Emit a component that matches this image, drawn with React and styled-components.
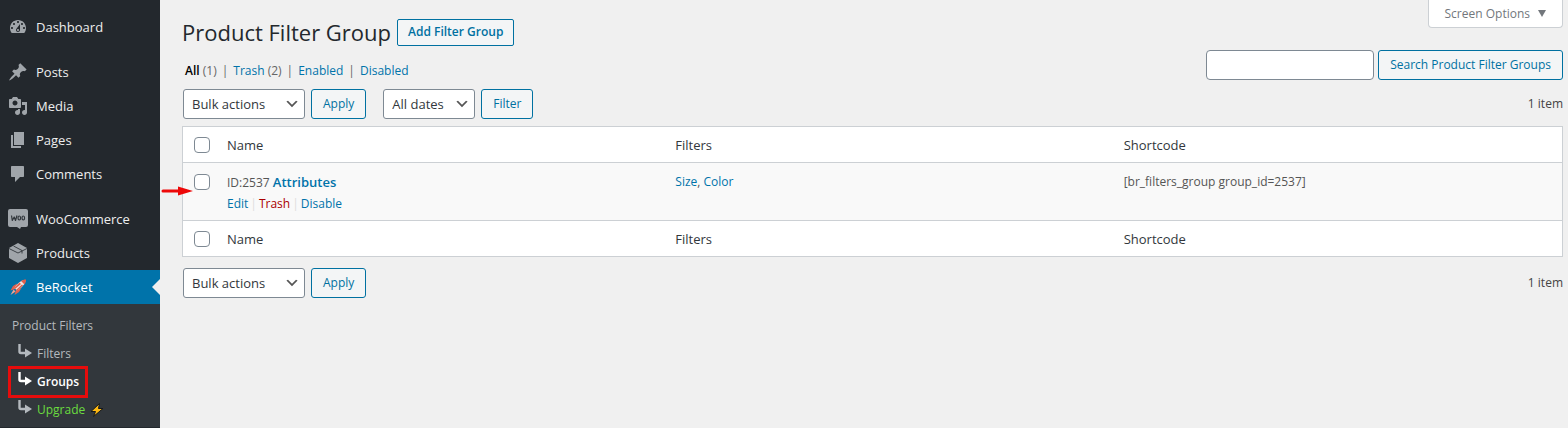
import React from "react";
import styled, { createGlobalStyle, css } from "styled-components";

const GlobalStyle = createGlobalStyle`
  *, *::before, *::after { box-sizing: border-box; }
  body {
    margin: 0;
    background: #f0f0f0;
    color: #444;
    font-family: "Open Sans", "Noto Sans", sans-serif;
    font-size: 12px;
    line-height: 20px;
  }
  a { color: #0073aa; text-decoration: none; }
`;

const Page = styled.div`
  display: flex;
  align-items: stretch;
  min-height: 100vh;
`;

const Sidebar = styled.nav`
  flex: 0 0 160px;
  padding-top: 10px;
  background: #23282d;
`;

const MenuLink = styled.a`
  position: relative;
  display: flex;
  align-items: center;
  gap: 8px;
  height: 34px;
  padding-left: 8px;
  margin-top: ${(p) => (p.$spaced ? "11px" : "0")};
  background: ${(p) => (p.$current ? "#0073aa" : "transparent")};
  color: ${(p) => (p.$current ? "#fff" : "#eee")};
  font-size: 13px;
  ${(p) =>
    p.$current &&
    css`
      &::after {
        content: "";
        position: absolute;
        right: 0;
        border: 8px solid transparent;
        border-right-color: #f0f0f0;
      }
    `}
`;

const Icon = styled.svg`
  flex: none;
  width: 20px;
  height: 20px;
  fill: #a0a5aa;
`;

const Submenu = styled.div`
  display: flex;
  flex-direction: column;
  align-items: flex-start;
  padding: 12px 0 3px 8px;
  background: #32373c;
`;

const SubTitle = styled.a`
  padding: 4px;
  margin-top: -4px;
  color: #b4b9be;
`;

const SubLink = styled.a`
  display: flex;
  align-items: center;
  gap: 4px;
  height: 28px;
  padding: 0 9px;
  color: ${(p) => p.$color || "#b4b9be"};
  font-weight: ${(p) => (p.$current ? 600 : 400)};
  ${(p) => p.$current && css`
    height: 32px;
    margin: -2px 0;
    padding: 0 6px;
    border: 3px solid #e60c0c;
  `}
`;

const Branch = styled.svg`
  width: 16px;
  height: 16px;
  margin-bottom: 6px;
`;

const Bolt = styled.svg`
  width: 16px;
  height: 16px;
`;

const Main = styled.main`
  flex: 1;
  min-width: 0;
  padding: 0 5px 20px 22px;
`;

const TopBar = styled.header`
  display: flex;
  justify-content: space-between;
  align-items: flex-start;
`;

const Heading = styled.div`
  display: flex;
  align-items: center;
  gap: 6px;
  padding-top: 18px;
`;

const Title = styled.h1`
  margin: 0;
  color: #23282d;
  font-size: 22px;
  font-weight: 400;
  line-height: 28px;
`;

const Button = styled.button`
  height: ${(p) => (p.$small ? "27px" : "30px")};
  padding: ${(p) => (p.$small ? "0 10px" : "0 11px")};
  border: 1px solid #0071a1;
  border-radius: ${(p) => (p.$small ? "2px" : "3px")};
  background: #f3f5f6;
  color: #0071a1;
  font: inherit;
  font-weight: ${(p) => (p.$small ? 600 : 400)};
  white-space: nowrap;
`;

const ScreenOptions = styled.button`
  display: flex;
  align-items: center;
  gap: 8px;
  height: 28px;
  padding: 0 16px;
  border: 1px solid #ccd0d4;
  border-top: 0;
  border-radius: 0 0 4px 4px;
  background: #fff;
  color: #72777c;
  font: inherit;
`;

const Caret = styled.svg`
  width: 8px;
  height: 7px;
  fill: #72777c;
`;

const SubBar = styled.div`
  display: flex;
  justify-content: space-between;
  align-items: flex-end;
  margin-top: 4px;
`;

const Views = styled.ul`
  display: flex;
  margin: 0;
  padding: 0 0 0 3px;
  list-style: none;
  line-height: 18px;
  color: #666;
  li + li::before { content: "|"; padding: 0 5px; }
`;

const CurrentView = styled.a`
  color: #000;
  font-weight: 600;
`;

const SearchForm = styled.form`
  display: flex;
  gap: 4px;
`;

const SearchInput = styled.input`
  width: 168px;
  height: 30px;
  border: 1px solid #7e8993;
  border-radius: 4px;
  background: #fff;
  font: inherit;
`;

const TableNav = styled.div`
  display: flex;
  align-items: center;
  gap: 6px;
  margin: ${(p) => (p.$bottom ? "11px 0 0" : "9px 0 7px")};
  padding-left: 1px;
`;

const SelectBox = styled.span`
  position: relative;
  display: flex;
  align-items: center;
  width: ${(p) => p.$width};
  margin-left: ${(p) => (p.$spaced ? "11px" : "0")};
`;

const Select = styled.select`
  appearance: none;
  width: 100%;
  height: 30px;
  padding: 0 24px 0 8px;
  border: 1px solid #7e8993;
  border-radius: 3px;
  background: #fff;
  color: #32373c;
  font: inherit;
  font-size: 13px;
`;

const Chevron = styled.svg`
  position: absolute;
  right: 5px;
  width: 16px;
  height: 16px;
  fill: #555;
  pointer-events: none;
`;

const Count = styled.span`
  margin-left: auto;
`;

const Table = styled.table`
  width: 100%;
  table-layout: fixed;
  border: 1px solid #ccd0d4;
  border-collapse: separate;
  border-spacing: 0;
  background: #fff;
  th { height: 35px; padding: 0 10px; font-size: 13px; font-weight: 400; text-align: left; color: #32373c; }
  td { padding: 9px 10px 6px; vertical-align: top; background: #f9f9f9; color: #555; }
  tbody td { border: solid #ccd0d4; border-width: 1px 0; }
`;

const CheckCol = styled.col`
  width: 34px;
`;

const Checkbox = styled.input`
  appearance: none;
  display: block;
  width: 16px;
  height: 16px;
  margin: ${(p) => (p.$top ? "2px 0 0 1px" : "0 0 0 1px")};
  border: 1px solid #7e8993;
  border-radius: 4px;
  background: #fff;
`;

const ItemLink = styled.a`
  font-size: 13px;
  font-weight: 600;
`;

const RowActions = styled.div`
  display: flex;
  gap: 2px;
  padding-top: 1px;
  color: #ddd;
`;

const DangerLink = styled.a`
  color: #a00;
`;

const CheckCell = styled.td`
  position: relative;
`;

const Pointer = styled.svg`
  position: absolute;
  top: 22px;
  left: -22px;
  width: 32px;
  height: 12px;
  fill: #ed0808;
`;

const icons = {
  dashboard: <path fillRule="evenodd" d="M3.76 16h12.48c1.1-1.37 1.76-3.11 1.76-5 0-4.42-3.58-8-8-8s-8 3.58-8 8c0 1.89.66 3.63 1.76 5zM10 4c.55 0 1 .45 1 1s-.45 1-1 1-1-.45-1-1 .45-1 1-1zM6 6c.55 0 1 .45 1 1s-.45 1-1 1-1-.45-1-1 .45-1 1-1zm8 0c.55 0 1 .45 1 1s-.45 1-1 1-1-.45-1-1 .45-1 1-1zm-5.37 5.55L12 7v6c0 1.1-.9 2-2 2s-2-.9-2-2c0-.57.24-1.08.63-1.45zM4 10c.55 0 1 .45 1 1s-.45 1-1 1-1-.45-1-1 .45-1 1-1zm12 0c.55 0 1 .45 1 1s-.45 1-1 1-1-.45-1-1 .45-1 1-1zm-5 3c0-.55-.45-1-1-1s-1 .45-1 1 .45 1 1 1 1-.45 1-1z" />,
  posts: <path d="M10.44 3.02l1.82-1.82 6.36 6.35-1.83 1.82c-1.05-.68-2.48-.57-3.41.36l-.75.75c-.92.93-1.04 2.35-.35 3.41l-1.83 1.82-2.41-2.41-2.8 2.79c-.42.42-3.38 2.71-3.8 2.29s1.86-3.39 2.28-3.81l2.79-2.79L4.1 9.36l1.83-1.82c1.05.69 2.48.57 3.4-.36l.75-.75c.93-.92 1.05-2.35.36-3.41z" />,
  media: <path fillRule="evenodd" d="M13 11V4c0-.55-.45-1-1-1h-1.67L9 1H5L3.67 3H2c-.55 0-1 .45-1 1v7c0 .55.45 1 1 1h10c.55 0 1-.45 1-1zM7 4.5c1.38 0 2.5 1.12 2.5 2.5S8.38 9.5 7 9.5 4.5 8.38 4.5 7 5.62 4.5 7 4.5zM14 6h5v10.5c0 1.38-1.12 2.5-2.5 2.5S14 17.88 14 16.5s1.12-2.5 2.5-2.5c.17 0 .34.02.5.05V9h-3V6zm-4 8.05V13h2v3.5c0 1.38-1.12 2.5-2.5 2.5S7 17.88 7 16.5 8.12 14 9.5 14c.17 0 .34.02.5.05z" />,
  pages: <path d="M6 15V2h10v13H6zm-1 1h8v2H3V5h2v11z" />,
  comments: <path d="M4 2h11c.6 0 1 .4 1 1v9c0 .6-.4 1-1 1h-3l-5 5v-5H4c-.6 0-1-.4-1-1V3c0-.6.4-1 1-1z" />,
  woo: (
    <>
      <path d="M2 0h16a2 2 0 0 1 2 2v14a2 2 0 0 1-2 2h-5l-1 2-3-2H2a2 2 0 0 1-2-2V2a2 2 0 0 1 2-2z" />
      <g fill="none" stroke="#32373c" strokeWidth="1.2" strokeLinejoin="round">
        <path d="M3.500 6.500l.8 5 1.900-3.500 1.300 3.500 1.500-5" />
        <ellipse cx="11.300" cy="9" rx="1.300" ry="2" />
        <ellipse cx="15.300" cy="9" rx="1.300" ry="2" />
      </g>
    </>
  ),
  products: (
    <>
      <path d="M10 0l9 5v10l-9 5-9-5V5z" />
      <path fill="none" stroke="#23282d" strokeWidth=".8" d="M1 5.500l9 4.500 9-4.500M5.500 3l8.500 4.500v3" />
    </>
  ),
  rocket: (
    <>
      <path fill="#e2604c" d="M9 6.500L5 9l-2.500 4.500L7 12zM13.500 11L11 15l-4.500 3 1.500-5z" />
      <path fill="#f3e6e3" d="M17.500 3c-4 0-8.500 3.500-11 8l2.500 2.500c4.500-2.500 8.500-6.500 8.500-10.500z" />
      <path fill="#e2604c" d="M18 2.500c-2 0-3.800.6-5 1.500l3.500 3.500c1-1.500 1.500-3 1.500-5zM11.500 5.500L6 11l1 1 6-5z" />
      <path fill="#e2604c" d="M15 8.500L9 14l-1-1 6-5.500z" />
      <path fill="#f3a392" d="M5.500 12.500l2 2-5 3.500z" />
    </>
  ),
};

const menu = [
  { label: "Dashboard", icon: "dashboard" },
  { label: "Posts", icon: "posts", spaced: true },
  { label: "Media", icon: "media" },
  { label: "Pages", icon: "pages" },
  { label: "Comments", icon: "comments" },
  { label: "WooCommerce", icon: "woo", spaced: true },
  { label: "Products", icon: "products" },
  { label: "BeRocket", icon: "rocket", current: true },
];

function SubItem({ label, color, current, children }) {
  const ink = current ? "#fff" : "#b4b9be";
  return (
    <SubLink href="#" $color={color} $current={current}>
      <Branch viewBox="0 0 16 16" aria-hidden="true">
        <path d="M2.500 1v7.500q0 1.500 1.500 1.500h5" fill="none" stroke={ink} strokeWidth="2.400" />
        <path d="M8 5.500l7 4.500-7 4.500z" fill={ink} />
      </Branch>
      {label}
      {children}
    </SubLink>
  );
}

function Dropdown({ label, options, width, spaced }) {
  return (
    <SelectBox $width={width} $spaced={spaced}>
      <Select aria-label={label}>
        {options.map((o) => <option key={o}>{o}</option>)}
      </Select>
      <Chevron viewBox="0 0 20 20" aria-hidden="true"><path d="M5 6l5 5 5-5 2 1-7 7-7-7 2-1z" /></Chevron>
    </SelectBox>
  );
}

function BulkActions() {
  return (
    <>
      <Dropdown label="Select bulk action" options={["Bulk actions", "Move to Trash"]} width="122px" />
      <Button type="button">Apply</Button>
    </>
  );
}

function HeaderRow() {
  return (
    <tr>
      <th><Checkbox type="checkbox" aria-label="Select all" /></th>
      <th scope="col">Name</th>
      <th scope="col">Filters</th>
      <th scope="col">Shortcode</th>
    </tr>
  );
}

export default function App() {
  return (
    <Page>
      <GlobalStyle />
      <Sidebar aria-label="Main menu">
        {menu.map((m) => (
          <MenuLink key={m.label} href="#" $spaced={m.spaced} $current={m.current}>
            <Icon viewBox="0 0 20 20" aria-hidden="true">{icons[m.icon]}</Icon>
            {m.label}
          </MenuLink>
        ))}
        <Submenu>
          <SubTitle href="#">Product Filters</SubTitle>
          <SubItem label="Filters" />
          <SubItem label="Groups" color="#fff" current />
          <SubItem label="Upgrade" color="#6bdc3f">
            <Bolt viewBox="0 0 16 16" aria-hidden="true">
              <path d="M10.500 1.500L2 9.500h4.500l-2 5L14 6.500H9.500z" fill="#fdb813" stroke="#15181b" strokeLinejoin="round" />
            </Bolt>
          </SubItem>
        </Submenu>
      </Sidebar>
      <Main>
        <TopBar>
          <Heading>
            <Title>Product Filter Group</Title>
            <Button type="button" $small>Add Filter Group</Button>
          </Heading>
          <ScreenOptions type="button">
            Screen Options
            <Caret viewBox="0 0 8 7" aria-hidden="true"><path d="M0 0h8L4 7z" /></Caret>
          </ScreenOptions>
        </TopBar>
        <SubBar>
          <Views>
            <li><CurrentView href="#">All</CurrentView> (1)</li>
            <li><a href="#">Trash</a> (2)</li>
            <li><a href="#">Enabled</a></li>
            <li><a href="#">Disabled</a></li>
          </Views>
          <SearchForm>
            <SearchInput type="search" aria-label="Search Product Filter Groups" />
            <Button type="button">Search Product Filter Groups</Button>
          </SearchForm>
        </SubBar>
        <TableNav>
          <BulkActions />
          <Dropdown label="Filter by date" options={["All dates"]} width="92px" spaced />
          <Button type="button">Filter</Button>
          <Count>1 item</Count>
        </TableNav>
        <Table>
          <colgroup><CheckCol /><col /><col /><col /></colgroup>
          <thead><HeaderRow /></thead>
          <tbody>
            <tr>
              <CheckCell>
                <Checkbox type="checkbox" aria-label="Select Attributes" $top />
                <Pointer viewBox="0 0 32 12" aria-hidden="true"><path d="M2 4.500h15V1.500L32 6l-15 4.500v-3H2a1.500 1.500 0 0 1 0-3z" /></Pointer>
              </CheckCell>
              <td>
                ID:2537 <ItemLink href="#">Attributes</ItemLink>
                <RowActions>
                  <a href="#">Edit</a>|<DangerLink href="#">Trash</DangerLink>|<a href="#">Disable</a>
                </RowActions>
              </td>
              <td><a href="#">Size</a>, <a href="#">Color</a></td>
              <td>[br_filters_group group_id=2537]</td>
            </tr>
          </tbody>
          <tfoot><HeaderRow /></tfoot>
        </Table>
        <TableNav $bottom>
          <BulkActions />
          <Count>1 item</Count>
        </TableNav>
      </Main>
    </Page>
  );
}
